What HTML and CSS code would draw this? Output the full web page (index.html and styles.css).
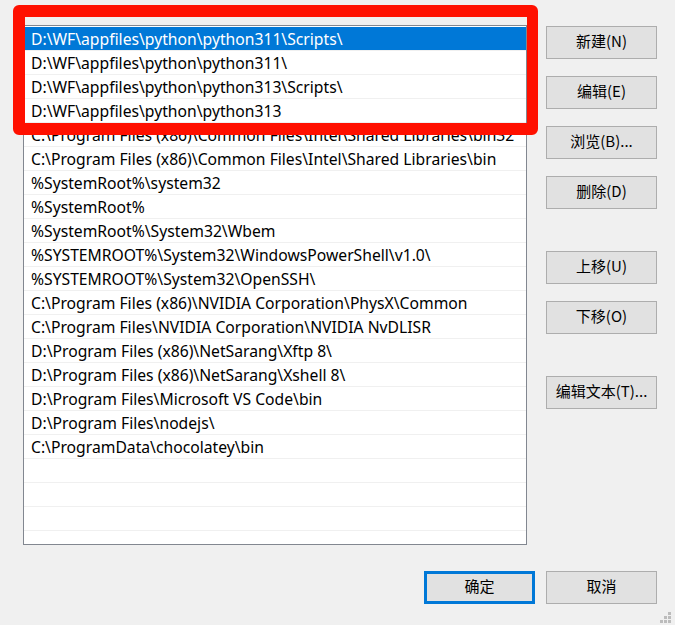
FILE: index.html
```html
<!DOCTYPE html>
<html lang="zh-CN">
<head>
<meta charset="utf-8">
<title>编辑环境变量</title>
<link rel="stylesheet" href="styles.css">
</head>
<body>
<div class="dialog">
  <div class="main">
    <div class="listbox">
      <div class="row selected">D:\WF\appfiles\python\python311\Scripts\</div>
      <div class="row">D:\WF\appfiles\python\python311\</div>
      <div class="row">D:\WF\appfiles\python\python313\Scripts\</div>
      <div class="row">D:\WF\appfiles\python\python313</div>
      <div class="row">C:\Program Files (x86)\Common Files\Intel\Shared Libraries\bin32</div>
      <div class="row">C:\Program Files (x86)\Common Files\Intel\Shared Libraries\bin</div>
      <div class="row">%SystemRoot%\system32</div>
      <div class="row">%SystemRoot%</div>
      <div class="row">%SystemRoot%\System32\Wbem</div>
      <div class="row">%SYSTEMROOT%\System32\WindowsPowerShell\v1.0\</div>
      <div class="row">%SYSTEMROOT%\System32\OpenSSH\</div>
      <div class="row">C:\Program Files (x86)\NVIDIA Corporation\PhysX\Common</div>
      <div class="row">C:\Program Files\NVIDIA Corporation\NVIDIA NvDLISR</div>
      <div class="row">D:\Program Files (x86)\NetSarang\Xftp 8\</div>
      <div class="row">D:\Program Files (x86)\NetSarang\Xshell 8\</div>
      <div class="row">D:\Program Files\Microsoft VS Code\bin</div>
      <div class="row">D:\Program Files\nodejs\</div>
      <div class="row">C:\ProgramData\chocolatey\bin</div>
      <div class="row"></div>
      <div class="row"></div>
      <div class="row"></div>
      <div class="row"></div>
    </div>
    <div class="side">
      <div class="group">
        <button class="btn">新建(N)</button>
        <button class="btn">编辑(E)</button>
        <button class="btn">浏览(B)...</button>
        <button class="btn">删除(D)</button>
      </div>
      <div class="group">
        <button class="btn">上移(U)</button>
        <button class="btn">下移(O)</button>
      </div>
      <div class="group">
        <button class="btn">编辑文本(T)...</button>
      </div>
    </div>
  </div>
  <div class="footer">
    <button class="btn default">确定</button>
    <button class="btn">取消</button>
  </div>
  <div class="highlight"></div>
  <div class="grip">
    <span class="d d1"></span>
    <span class="d d2"></span><span class="d d3"></span>
    <span class="d d4"></span><span class="d d5"></span><span class="d d6"></span>
  </div>
</div>
</body>
</html>
```

FILE: styles.css
```css
html, body {
  margin: 0;
  padding: 0;
  background: #f0f0f0;
}
body {
  width: 675px;
  height: 625px;
  overflow: hidden;
  font-family: "Noto Sans", "Noto Sans CJK SC", sans-serif;
  font-size: 15.7px;
  color: #000;
}
.dialog {
  position: relative;
  width: 675px;
  height: 625px;
  box-sizing: border-box;
  padding: 25px 0 0 23px;
}
.main {
  display: flex;
  align-items: flex-start;
}
.listbox {
  width: 504px;
  height: 520px;
  box-sizing: border-box;
  border: 1px solid #828790;
  background: #fff;
  padding-top: 1px;
  overflow: hidden;
}
.row {
  height: 22px;
  line-height: 22px;
  padding-top: 1px;
  border-bottom: 1px solid #f0f0f0;
  padding-left: 7px;
  white-space: nowrap;
  overflow: hidden;
  color: #000;
}
.row.selected {
  background: #0078d7;
  color: #fff;
}
.side {
  margin-left: 19px;
  margin-top: 1px;
  display: flex;
  flex-direction: column;
  gap: 42px;
}
.group {
  display: flex;
  flex-direction: column;
  gap: 17px;
}
.btn {
  width: 111px;
  height: 33px;
  box-sizing: border-box;
  border: 1px solid #adadad;
  background: #e1e1e1;
  font-family: "Noto Sans CJK SC", "Noto Sans", sans-serif;
  font-size: 15px;
  color: #000;
  padding: 0 0 3px 0;
  margin: 0;
  line-height: 28px;
}
.btn.default {
  border: 3px solid #0078d7;
  line-height: 24px;
}
.footer {
  display: flex;
  justify-content: flex-end;
  gap: 11px;
  margin-top: 26px;
  width: 634px;
}
.highlight {
  position: absolute;
  left: 13px;
  top: 5px;
  width: 525px;
  height: 130px;
  box-sizing: border-box;
  border: 12px solid #ff1000;
  border-right-width: 11px;
  border-radius: 6px;
  pointer-events: none;
}
.grip {
  position: absolute;
  left: 660px;
  top: 612px;
  width: 13px;
  height: 13px;
}
.d {
  position: absolute;
  width: 3px;
  height: 3px;
  background: #bcbcbc;
}
.d1 { left: 8px; top: 0; }
.d2 { left: 4px; top: 4px; }
.d3 { left: 8px; top: 4px; }
.d4 { left: 0; top: 8px; }
.d5 { left: 4px; top: 8px; }
.d6 { left: 8px; top: 8px; }
```
